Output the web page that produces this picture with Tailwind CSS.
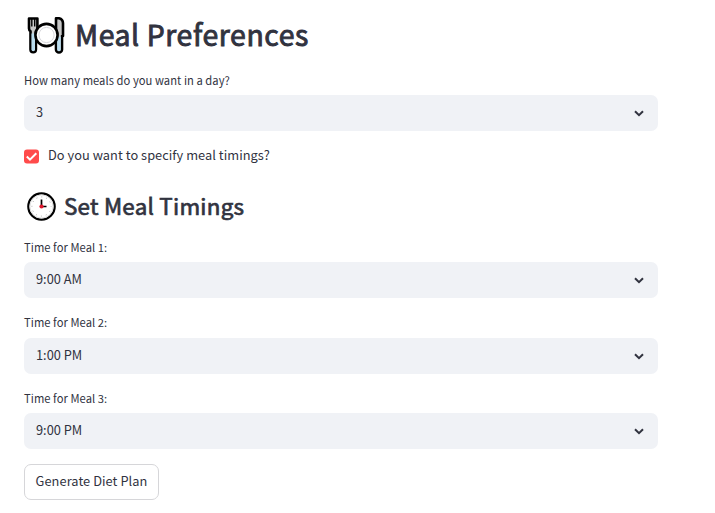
<!DOCTYPE html>
<html lang="en">
<head>
<meta charset="utf-8">
<title>Meal Preferences</title>
<script src="https://cdn.jsdelivr.net/npm/@tailwindcss/browser@4"></script>
</head>
<body class="bg-white text-[#31333f] font-['Noto_Sans_CJK_SC','Open_Sans',sans-serif] overflow-hidden">
<svg class="hidden"><symbol id="chev" viewBox="0 0 10 7"><path d="M1 1.2 5 5.2 9 1.2" fill="none" stroke="#31333f" stroke-width="2"/></symbol></svg>
<main class="w-[658px] pl-6 pt-[11px] flex flex-col">
  <h1 class="h-12 flex items-center text-[28.4px] font-normal whitespace-nowrap">
    <svg class="ml-[3px] mr-[10px] shrink-0" width="38" height="38" viewBox="0 0 38 38">
      <path d="M2 2.500v10q0 2 1.500 2.700V33.500a2.700 2.700 0 0 0 5.400 0V15.200q1.500-.7 1.500-2.700v-10z" fill="#c8c8c8" stroke="#000" stroke-width="2.600" stroke-linejoin="round"/>
      <path d="M4.500 17.500h3.500v16a1.700 1.700 0 0 1-3.500 0z" fill="#b9dcee"/>
      <path d="M4.800 2.500v8M7.700 2.500v8" stroke="#000" stroke-width="1.400"/>
      <path d="M29 2.300h3q4 1 4 5v12.700h-1V33.500a3 3 0 0 1-6 0z" fill="#c8c8c8" stroke="#000" stroke-width="2.600" stroke-linejoin="round"/>
      <path d="M30.200 20.500h3.600v13a1.800 1.800 0 0 1-3.600 0z" fill="#b9dcee"/>
      <circle cx="19.500" cy="19" r="11.100" fill="#fff" stroke="#000" stroke-width="2.600"/>
      <circle cx="19.500" cy="19" r="7.600" fill="#fff" stroke="#d7d7dc" stroke-width="1"/>
    </svg>
    <span class="relative -top-px tracking-[0.6px] [-webkit-text-stroke:0.9px_#31333f]">Meal Preferences</span>
  </h1>
  <label class="mt-[11px] h-5 leading-5 text-[11.200px] tracking-[0.050px] whitespace-nowrap"><span>How many meals do you want in a day?</span></label>
  <div class="mt-[5px] h-9 rounded-[7px] bg-[#f0f2f6] flex items-center justify-between pl-3 pr-[14px] text-[12.800px]"><span class="pb-0.5">3</span><svg width="10" height="7"><use href="#chev"/></svg></div>
  <div class="mt-[15px] h-5 flex items-center text-[12.800px] tracking-[0.040px] whitespace-nowrap">
    <svg class="mr-[9px]" width="15" height="15" viewBox="0 0 15 15"><rect y=".5" width="15" height="14" rx="3" fill="#ff4b4b"/><path d="M2.800 7.500 6 10.700 12.300 4.300" fill="none" stroke="#fff" stroke-width="2"/></svg>
    <span class="pb-0.5">Do you want to specify meal timings?</span>
  </div>
  <h2 class="mt-[20px] h-10 flex items-center text-[22.400px] font-normal whitespace-nowrap">
    <svg class="ml-[3px] mr-[8px] shrink-0" width="29" height="29" viewBox="0 0 29 29">
      <circle cx="14.500" cy="14.500" r="13.200" fill="#fff" stroke="#000" stroke-width="2.200"/>
      <circle cx="14.500" cy="14.500" r="11.600" fill="none" stroke="#ddd" stroke-width="1"/>
      <circle cx="14.500" cy="14.500" r="9.600" fill="none" stroke="#aaa" stroke-width="1" stroke-dasharray="1 4.027" stroke-dashoffset=".5"/>
      <path d="M14.500 14.500V7.500M14.500 14.500H19.500" stroke="#000" stroke-width="1.700"/>
      <circle cx="14.500" cy="14.500" r="2.100" fill="#e0182d"/>
    </svg>
    <span class="tracking-[0.240px] [-webkit-text-stroke:0.7px_#31333f]">Set Meal Timings</span>
  </h2>
  <label class="mt-[11px] h-5 leading-5 text-[11.200px] tracking-[0.050px]"><span>Time for Meal 1:</span></label>
  <div class="mt-[5px] h-9 rounded-[7px] bg-[#f0f2f6] flex items-center justify-between pl-3 pr-[14px] text-[12.800px]"><span class="pb-0.5">9:00 AM</span><svg width="10" height="7"><use href="#chev"/></svg></div>
  <label class="mt-[14px] h-5 leading-5 text-[11.200px] tracking-[0.050px]"><span>Time for Meal 2:</span></label>
  <div class="mt-[6px] h-9 rounded-[7px] bg-[#f0f2f6] flex items-center justify-between pl-3 pr-[14px] text-[12.800px]"><span class="pb-0.5">1:00 PM</span><svg width="10" height="7"><use href="#chev"/></svg></div>
  <label class="mt-[14px] h-5 leading-5 text-[11.200px] tracking-[0.050px]"><span>Time for Meal 3:</span></label>
  <div class="mt-[5px] h-9 rounded-[7px] bg-[#f0f2f6] flex items-center justify-between pl-3 pr-[14px] text-[12.800px]"><span class="pb-0.5">9:00 PM</span><svg width="10" height="7"><use href="#chev"/></svg></div>
  <button class="mt-[15px] h-9 w-[135px] rounded-[7px] border border-[#d6d6d9] bg-white flex items-center justify-center text-[12.800px] tracking-[0.060px] whitespace-nowrap"><span class="pb-0.5">Generate Diet Plan</span></button>
</main>
</body>
</html>
